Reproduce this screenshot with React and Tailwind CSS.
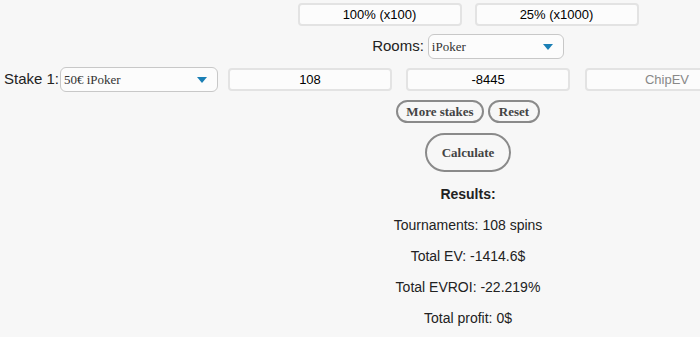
import React from "react";

const Arrow = () => (
  <svg width="10" height="6" viewBox="0 0 10 6" className="shrink-0">
    <path d="M0 0 L10 0 L5 6 Z" fill="#1a7fb5" />
  </svg>
);

const Select = ({ value, w }) => (
  <div
    className={`${w} h-[25px] flex items-center justify-between pl-[3px] pr-[10px] border border-[#c8c8c8] rounded-[6px] bg-[#fcfcfc] text-[13px] text-[#333] [font-family:'Liberation_Serif',serif]`}
  >
    <span>{value}</span>
    <Arrow />
  </div>
);

const Box = ({ children, muted }) => (
  <div
    className={`w-[164px] h-[23px] flex items-center justify-center border-2 border-[#e3e3e3] rounded-[4px] bg-[#fcfcfc] text-[13px] ${
      muted ? "text-[#888]" : "text-black"
    }`}
  >
    {children}
  </div>
);

const Pill = ({ children, className }) => (
  <button
    className={`border-2 border-[#8a8a8a] rounded-full bg-[#f7f7f7] text-[#444] font-bold text-[13px] [font-family:'Liberation_Serif',serif] ${className}`}
  >
    {children}
  </button>
);

export default function App() {
  return (
    <div className="w-[700px] h-[337px] overflow-hidden bg-[#f7f7f7] [font-family:'Liberation_Sans',Arial,sans-serif] text-[#222]">
      <div className="w-[936px] flex flex-col items-center">
        <div className="flex gap-[13px] mt-[3px]">
          <Box>100% (x100)</Box>
          <Box>25% (x1000)</Box>
        </div>

        <div className="flex items-center gap-[4px] mt-[8px] text-[15px]">
          <span>Rooms:</span>
          <Select value="iPoker" w="w-[136px]" />
        </div>

        <div className="flex items-center mt-[8px] text-[15px] w-[928px]">
          <span className="w-[56px] shrink-0">Stake 1:</span>
          <Select value="50€ iPoker" w="w-[158px]" />
          <div className="ml-[10px]">
            <Box>108</Box>
          </div>
          <div className="ml-[14px]">
            <Box>-8445</Box>
          </div>
          <div className="ml-[15px]">
            <Box muted>ChipEV</Box>
          </div>
        </div>

        <div className="flex gap-[4px] mt-[8px]">
          <Pill className="w-[88px] h-[23px]">More stakes</Pill>
          <Pill className="w-[52px] h-[23px]">Reset</Pill>
        </div>

        <Pill className="w-[86px] h-[39px] mt-[10px]">Calculate</Pill>

        <div className="flex flex-col items-center text-[14px] text-[#222] mt-[14px] leading-[16px]">
          <div className="font-bold">Results:</div>
          <div className="mt-[15px]">Tournaments: 108 spins</div>
          <div className="mt-[15px]">Total EV: -1414.6$</div>
          <div className="mt-[15px]">Total EVROI: -22.219%</div>
          <div className="mt-[15px]">Total profit: 0$</div>
        </div>
      </div>
    </div>
  );
}
